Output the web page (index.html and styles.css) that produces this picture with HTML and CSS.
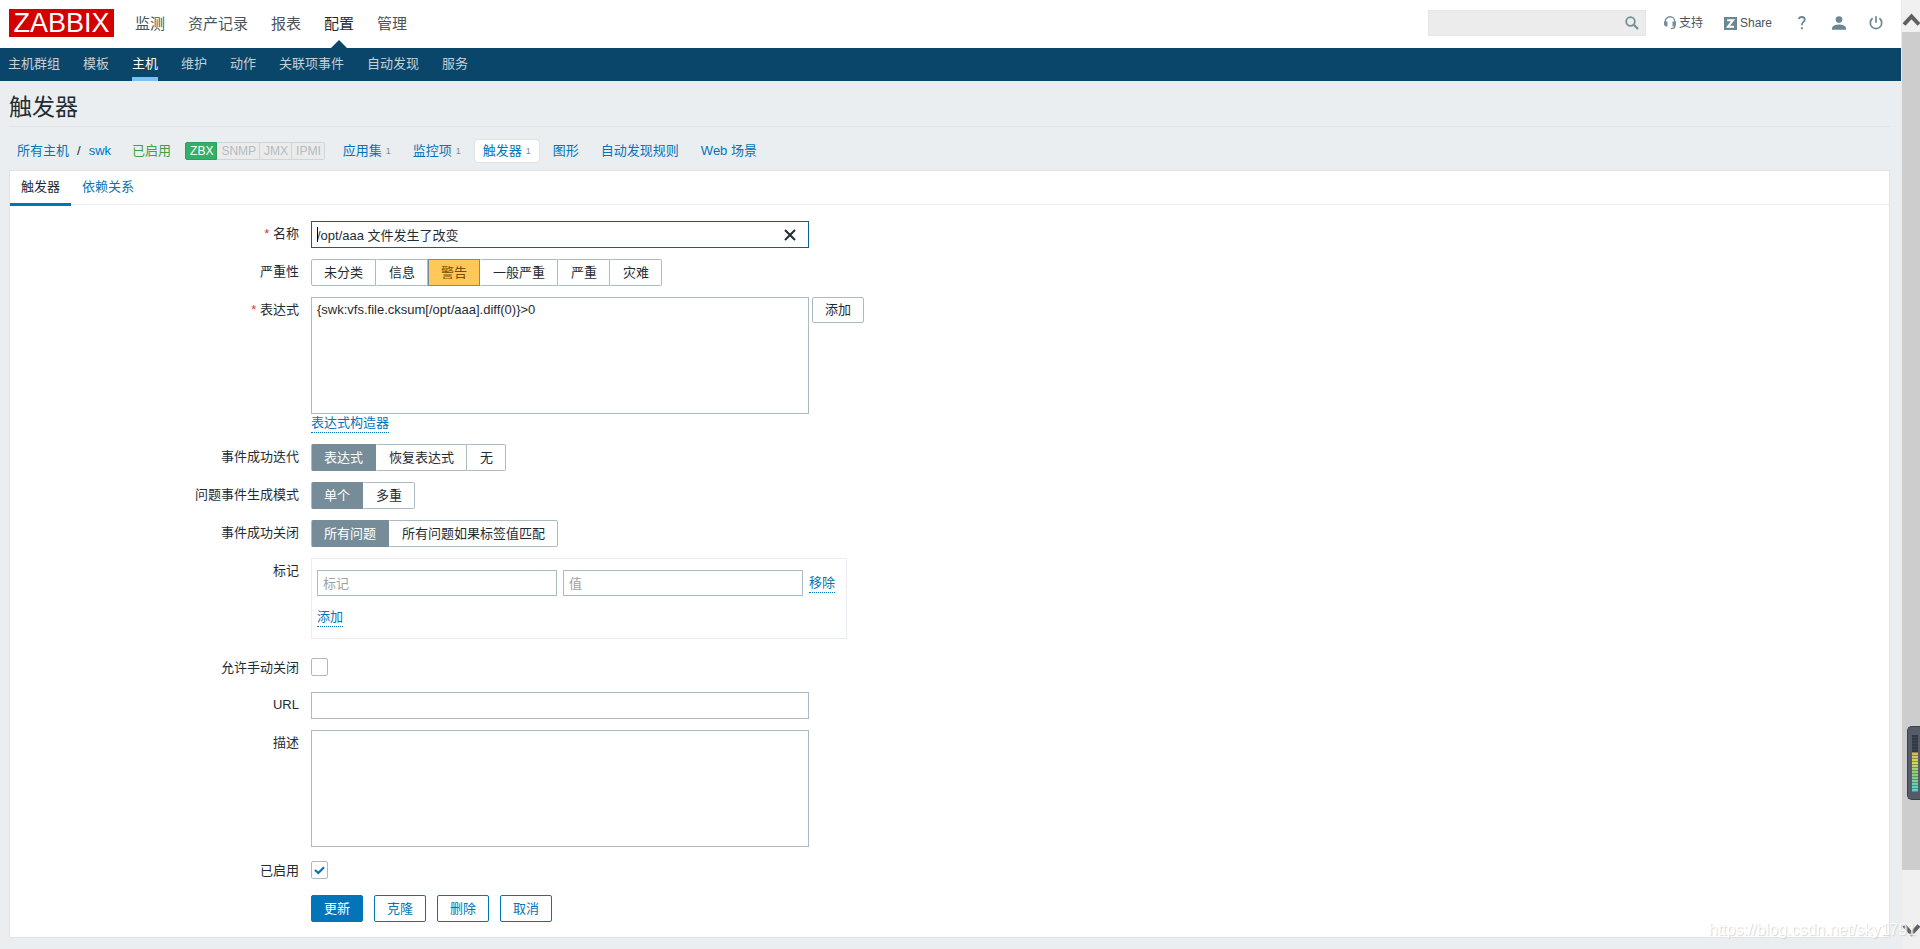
FILE: index.html
```html
<!DOCTYPE html>
<html lang="zh-CN">
<head>
<meta charset="utf-8">
<title>触发器</title>
<link rel="stylesheet" href="styles.css">
</head>
<body>
<div class="window">
  <div class="page">
    <header class="top">
      <a class="logo" href="#">ZABBIX</a>
      <nav class="main-menu">
        <a href="#">监测</a>
        <a href="#">资产记录</a>
        <a href="#">报表</a>
        <a href="#" class="selected">配置</a>
        <a href="#">管理</a>
      </nav>
      <form class="search">
        <input type="text" aria-label="搜索">
        <button type="button" aria-label="搜索">
          <svg width="14" height="14" viewBox="0 0 14 14"><circle cx="5.5" cy="5.5" r="4.3" fill="none" stroke="#768d99" stroke-width="1.8"/><path d="M8.8 8.8L13 13" stroke="#768d99" stroke-width="2.2"/></svg>
        </button>
      </form>
      <nav class="user-menu">
        <a class="support" href="#"><svg width="12" height="14" viewBox="0 0 12 14"><path d="M1.2 7V5.6a4.8 4.8 0 0 1 9.6 0V7M10.8 9v1.5Q10.8 12.6 7 12.6" fill="none" stroke="#768d99" stroke-width="1.4"/><path d="M0 5.500h3.500v5H1.800L0 9zM12 5.500H8.500v5h1.700L12 9z" fill="#768d99"/></svg>支持</a>
        <a class="share" href="#"><svg width="13" height="13" viewBox="0 0 13 13"><path d="M0 0h13v13H0z" fill="#6d8693"/><path d="M3.200 3.200h5.800L4 9.700h6" fill="none" stroke="#fff" stroke-width="2"/></svg>Share</a>
        <a class="icon-link" href="#" aria-label="帮助"><svg width="8" height="14" viewBox="0 0 8 14"><path d="M.9 3Q1.200 1 3.900 1Q6.800 1 6.800 3.500Q6.800 4.900 5.200 6.100Q3.900 7.200 3.900 9.300" fill="none" stroke="#6d8693" stroke-width="1.800"/><path d="M2.900 11.200h2v2h-2z" fill="#6d8693"/></svg></a>
        <a class="icon-link" href="#" aria-label="用户"><svg width="14" height="14" viewBox="0 0 14 14"><circle cx="7" cy="3.600" r="3.300" fill="#6d8693"/><path d="M0 13.800v-2Q1.500 8.600 7 8.600T14 11.800v2z" fill="#6d8693"/></svg></a>
        <a class="icon-link" href="#" aria-label="退出"><svg width="14" height="14" viewBox="0 0 14 14"><path d="M3.600 2.300a5.700 5.700 0 1 0 6.800 0M7 .3v6.500" fill="none" stroke="#6d8693" stroke-width="1.700"/></svg></a>
      </nav>
    </header>

    <nav class="sub-menu">
      <a href="#">主机群组</a>
      <a href="#">模板</a>
      <a href="#" class="selected">主机</a>
      <a href="#">维护</a>
      <a href="#">动作</a>
      <a href="#">关联项事件</a>
      <a href="#">自动发现</a>
      <a href="#">服务</a>
    </nav>

    <main class="content">
      <h1>触发器</h1>
      <nav class="crumbs">
        <span class="path"><a href="#">所有主机</a><span>/</span><a href="#">swk</a></span>
        <span class="enabled">已启用</span>
        <span class="badges"><span class="badge on">ZBX</span><span class="badge">SNMP</span><span class="badge">JMX</span><span class="badge">IPMI</span></span>
        <span class="links">
          <a href="#">应用集<sup>1</sup></a>
          <a href="#">监控项<sup>1</sup></a>
          <a href="#" class="selected">触发器<sup>1</sup></a>
          <a href="#">图形</a>
          <a href="#">自动发现规则</a>
          <a href="#">Web 场景</a>
        </span>
      </nav>

      <form class="panel">
        <nav class="tabs">
          <a href="#" class="selected">触发器</a>
          <a href="#">依赖关系</a>
        </nav>
        <div class="rows">
          <div class="row">
            <label class="label required" for="name">名称</label>
            <div class="field name-field">
              <input id="name" class="box" type="text" value="/opt/aaa 文件发生了改变">
              <span class="caret"></span>
              <button class="clear" type="button" aria-label="清除"><svg width="12" height="12" viewBox="0 0 12 12"><path d="M1 1l10 10M11 1L1 11" stroke="#1f2c33" stroke-width="2"/></svg></button>
            </div>
          </div>
          <div class="row">
            <span class="label">严重性</span>
            <div class="segments severity">
              <label><input type="radio" name="severity"><span>未分类</span></label>
              <label><input type="radio" name="severity"><span>信息</span></label>
              <label><input type="radio" name="severity" checked><span>警告</span></label>
              <label><input type="radio" name="severity"><span>一般严重</span></label>
              <label><input type="radio" name="severity"><span>严重</span></label>
              <label><input type="radio" name="severity"><span>灾难</span></label>
            </div>
          </div>
          <div class="row">
            <label class="label required" for="expression">表达式</label>
            <div>
              <div class="expression">
                <textarea id="expression" class="box">{swk:vfs.file.cksum[/opt/aaa].diff(0)}&gt;0</textarea>
                <button class="add" type="button">添加</button>
              </div>
              <a class="dotted" href="#">表达式构造器</a>
            </div>
          </div>
          <div class="row">
            <span class="label">事件成功迭代</span>
            <div class="segments">
              <label><input type="radio" name="recovery" checked><span>表达式</span></label>
              <label><input type="radio" name="recovery"><span>恢复表达式</span></label>
              <label><input type="radio" name="recovery"><span>无</span></label>
            </div>
          </div>
          <div class="row">
            <span class="label">问题事件生成模式</span>
            <div class="segments">
              <label><input type="radio" name="mode" checked><span>单个</span></label>
              <label><input type="radio" name="mode"><span>多重</span></label>
            </div>
          </div>
          <div class="row">
            <span class="label">事件成功关闭</span>
            <div class="segments">
              <label><input type="radio" name="closes" checked><span>所有问题</span></label>
              <label><input type="radio" name="closes"><span>所有问题如果标签值匹配</span></label>
            </div>
          </div>
          <div class="row">
            <span class="label">标记</span>
            <div class="tags">
              <div class="tag-row">
                <input type="text" placeholder="标记" aria-label="标记">
                <input type="text" placeholder="值" aria-label="值">
                <a class="dotted" href="#">移除</a>
              </div>
              <a class="dotted" href="#">添加</a>
            </div>
          </div>
          <div class="row">
            <label class="label" for="manual">允许手动关闭</label>
            <div class="check"><input id="manual" type="checkbox"></div>
          </div>
          <div class="row">
            <label class="label" for="url">URL</label>
            <input id="url" class="box" type="text">
          </div>
          <div class="row">
            <label class="label" for="description">描述</label>
            <textarea id="description" class="box"></textarea>
          </div>
          <div class="row">
            <label class="label" for="enabled">已启用</label>
            <div class="check">
              <input id="enabled" type="checkbox" checked>
              <svg class="tick" width="11" height="9" viewBox="0 0 11 9"><path d="M1 4l3.300 3L10 1.200" fill="none" stroke="#0275b8" stroke-width="2.200"/></svg>
            </div>
          </div>
          <div class="row">
            <span class="label"></span>
            <div class="actions">
              <button class="primary" type="button">更新</button>
              <button type="button">克隆</button>
              <button type="button">删除</button>
              <button type="button">取消</button>
            </div>
          </div>
        </div>
      </form>
    </main>
  </div>

  <aside class="scrollbar">
    <svg class="arrow" width="18" height="32" viewBox="0 0 18 32"><path d="M2 24.500l7.500-8L17 24.500" fill="none" stroke="#606060" stroke-width="4"/></svg>
    <div class="thumb"></div>
    <svg class="arrow" width="18" height="32" viewBox="0 0 18 32"><path d="M2 8.500l7.500 8L17 8.500" fill="none" stroke="#606060" stroke-width="4"/></svg>
  </aside>
  <div class="meter"><div class="level"></div></div>
  <div class="watermark">https://blog.csdn.net/sky1791</div>
</div>
</body>
</html>
```
FILE: styles.css
```css
* { box-sizing: border-box; }
body {
  margin: 0;
  background: #ebeef0;
  color: #1f2c33;
  font: 13px/18px "Liberation Sans", "Noto Sans CJK SC", sans-serif;
}
a { color: #0275b8; text-decoration: none; }
input, textarea, button { font: inherit; color: inherit; margin: 0; }
svg { display: block; flex: none; }

.window {
  position: relative;
  display: grid;
  grid-template-columns: 1fr 19px;
  min-height: 100vh;
  overflow: hidden;
}
.page { min-width: 0; }

.top {
  display: flex;
  align-items: center;
  height: 48px;
  padding: 0 18px 2px 9px;
  background: #fff;
}
.logo {
  width: 105px;
  height: 28px;
  margin-right: 21px;
  background: #d40000;
  color: #fff;
  font-size: 27px;
  line-height: 28px;
  text-align: center;
}
.main-menu { display: flex; flex: 1; gap: 23px; align-self: flex-start; font-size: 15px; line-height: 48px; }
.main-menu a { position: relative; color: #4a5459; }
.main-menu .selected { color: #1f2c33; }
.main-menu .selected::after {
  content: "";
  position: absolute;
  left: 7px;
  bottom: 0;
  border: 8px solid transparent;
  border-top: 0;
  border-bottom-color: #0a466a;
}
.search {
  display: flex;
  align-items: center;
  width: 218px;
  height: 26px;
  margin-right: 18px;
  padding-right: 6px;
  background: #ececec;
  border: 1px solid #e4e6e7;
}
.search input { flex: 1; min-width: 0; border: 0; background: none; outline: 0; }
.search button { padding: 0; border: 0; background: none; }
.user-menu { display: flex; align-items: center; font-size: 12px; }
.user-menu a { display: flex; align-items: center; gap: 3px; color: #4a5459; }
.user-menu .share { margin-left: 21px; }
.user-menu .icon-link { margin-left: 26px; }
.user-menu .icon-link:last-child { margin-left: 23px; }

.sub-menu {
  display: flex;
  gap: 23px;
  height: 33px;
  padding: 0 8px;
  background: #0a466a;
  line-height: 32px;
}
.sub-menu a { color: #c3d1d9; }
.sub-menu .selected { color: #fff; border-bottom: 4px solid #7ac2f5; }

.content { padding: 0 11px 11px 9px; }
h1 {
  height: 46px;
  margin: 0;
  border-bottom: 1px solid #dfe4e7;
  font-size: 23px;
  font-weight: 400;
  line-height: 52px;
}
.crumbs { display: flex; align-items: center; height: 43px; padding: 4px 8px 0; }
.path { display: flex; gap: 8px; }
.enabled { margin: 0 14px 0 21px; color: #429e47; }
.badges { display: flex; margin-right: 9px; font-size: 12px; line-height: 16px; }
.badge {
  padding: 0 3px 0 4px;
  background: #ebebeb;
  border: 1px solid #ccd5d9;
  border-left-width: 0;
  color: #b0bcc2;
}
.badge.on { background: #34af67; border-color: #2f9f5e; border-left-width: 1px; border-radius: 2px 0 0 2px; color: #fff; }
.badge:last-child { border-radius: 0 2px 2px 0; }
.links { display: flex; gap: 4px; }
.links a { display: flex; align-items: center; height: 24px; padding: 0 8px; border: 1px solid transparent; border-radius: 4px; }
.links sup { margin-left: 4px; color: #768d99; font-size: 9px; line-height: 18px; vertical-align: baseline; }
.links .selected { background: #fff; border-color: #dfe4e7; }

.panel { background: #fff; border: 1px solid #dfe4e7; }
.tabs { display: flex; height: 34px; border-bottom: 1px solid #ebeef0; line-height: 32px; }
.tabs a { height: 35px; padding: 0 11px; }
.tabs .selected { border-bottom: 3px solid #0275b8; color: #1f2c33; }

.rows { display: grid; gap: 11px; padding: 16px 0 15px; }
.row { display: flex; gap: 12px; align-items: flex-start; }
.label { flex: none; width: 289px; line-height: 26px; text-align: right; }
.required::before { content: "* "; color: #e33734; }
.box {
  display: block;
  width: 498px;
  height: 27px;
  padding: 0 5px;
  border: 1px solid #acbbc2;
  border-radius: 0;
  background: #fff;
  outline: 0;
}
textarea.box { height: 117px; padding: 4px 5px; line-height: 15px; resize: none; }
.name-field { position: relative; }
.name-field .box { border-color: #0a5f95; }
.caret { position: absolute; left: 6px; top: 6px; width: 1px; height: 15px; background: #000; }
.clear { position: absolute; right: 13px; top: 8px; padding: 0; border: 0; background: none; }

.segments { display: flex; }
.segments label { position: relative; display: block; }
.segments input { position: absolute; opacity: 0; margin: 0; }
.segments span {
  display: block;
  height: 27px;
  padding: 0 12px;
  border: 1px solid #acbbc2;
  border-left-color: transparent;
  background: #fff;
  background-clip: padding-box;
  line-height: 25px;
}
.segments label:first-child span { border-left-color: #acbbc2; border-radius: 2px 0 0 2px; }
.segments label:last-child span { border-radius: 0 2px 2px 0; }
.segments :checked + span { background: #768d99; border-color: #768d99; color: #fff; }
.segments.severity :checked + span { background: #ffc859; color: #734d00; }

.expression { display: flex; gap: 3px; align-items: flex-start; }
.dotted { display: inline-block; border-bottom: 1px dotted #0275b8; }
button.add { height: 26px; }
.add, .actions button {
  padding: 0 12px;
  border: 1px solid #acbbc2;
  border-radius: 2px;
  background: #fff;
  line-height: 24px;
}
.tags { margin-bottom: 5px; padding: 11px 11px 11px 5px; border: 1px solid #ebeef0; }
.tag-row { display: flex; gap: 6px; align-items: center; margin-bottom: 12px; }
.tag-row input { width: 240px; height: 26px; padding: 0 5px; border: 1px solid #acbbc2; outline: 0; }
.tag-row input::placeholder { color: #a0a0a0; }

.check { position: relative; height: 26px; padding-top: 3px; }
.check input { display: block; width: 17px; height: 18px; appearance: none; border: 1px solid #acbbc2; border-radius: 2px; background: #fff; }
.tick { position: absolute; left: 3px; top: 8px; }
.actions { display: flex; gap: 11px; }
.actions button { height: 27px; border-color: #0275b8; color: #0275b8; }
.actions .primary { background: #0275b8; color: #fff; }

.scrollbar { display: flex; flex-direction: column; background: #f0f0f0; border-left: 1px solid #e8eaeb; }
.thumb { flex: 1; background: #cdcdcd; }
.scrollbar .arrow:last-child { margin-top: 47px; }
.meter {
  position: absolute;
  right: 0;
  top: 726px;
  width: 13px;
  height: 74px;
  padding: 8px 2px 8px 4px;
  border: 1px solid #3b404b;
  border-right: 0;
  border-radius: 5px 0 0 5px;
  background: #555b69;
}
.level {
  width: 6px;
  height: 57px;
  background:
    repeating-linear-gradient(transparent 0 2px, #454b5880 2px 3px),
    linear-gradient(#333945 30%, #d8b55a 30%, #d3d94d 48%, #8fcf75 65%, #4fd6cb);
}
.watermark {
  position: absolute;
  right: 4px;
  bottom: 10px;
  color: #fff;
  font-size: 16px;
  text-shadow: 1px 1px 1px #ccc;
  opacity: 0.8;
}
```
